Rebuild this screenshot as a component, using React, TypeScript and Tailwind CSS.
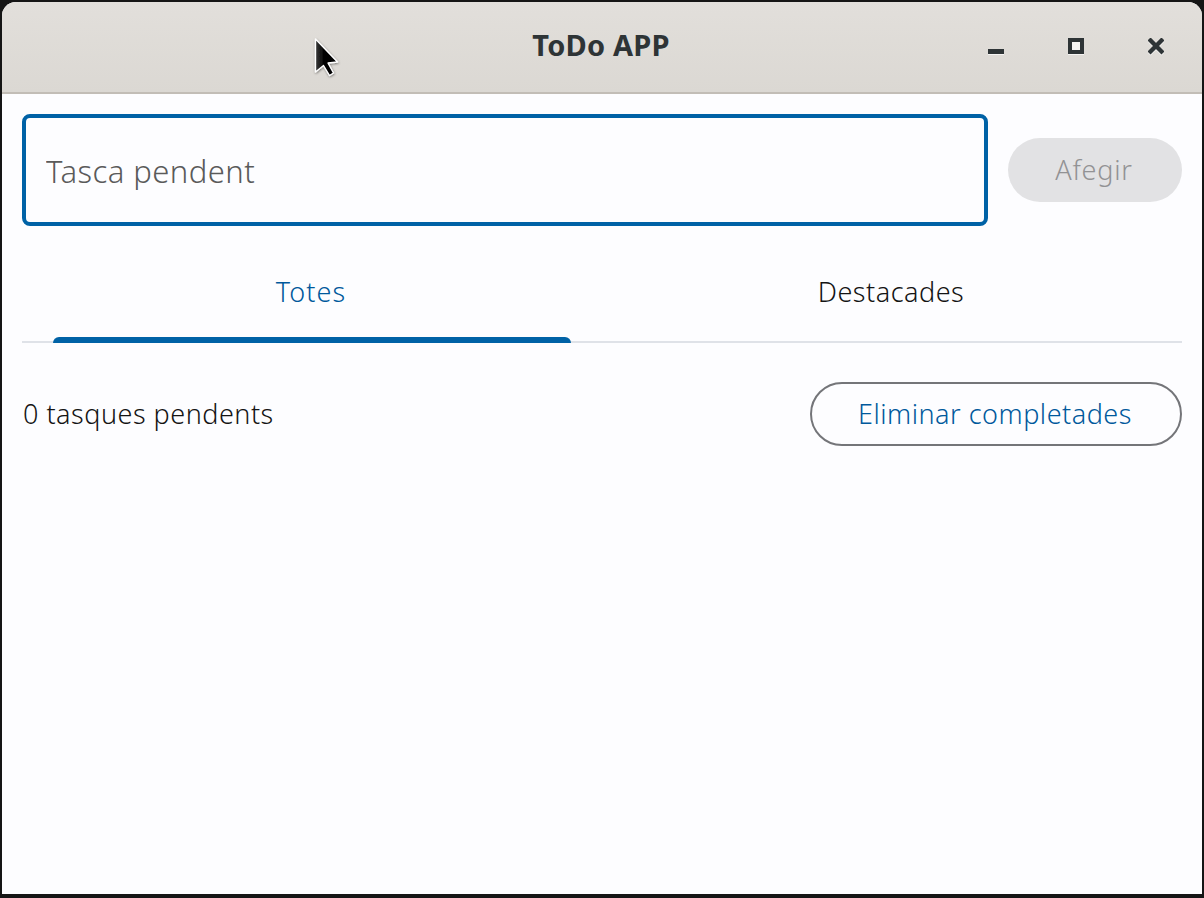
export default function App() {
  const font = "[font-family:'Noto_Sans',sans-serif]";
  return (
    <div className={`w-[1204px] h-[898px] bg-[#151515] pt-[2px] px-[2px] pb-[4px] overflow-hidden relative ${font}`}>
      <div className="h-full flex flex-col rounded-t-[14px] overflow-hidden bg-[#fdfdff]">
        <header className="h-[92px] shrink-0 border-b-2 border-[#c2bdb6] bg-gradient-to-b from-[#e2dfdb] to-[#dbd8d3] flex items-center relative">
          <div className="flex-1 text-center text-[29px] font-bold text-[#2e3436] pb-[5px] pr-[2px] tracking-[0.2px]">ToDo APP</div>
          <div className="absolute right-0 top-0 h-full flex items-center">
            <button className="w-[80px] h-[80px] flex items-center justify-center">
              <svg width="16" height="18" viewBox="0 0 16 18"><rect x="0" y="12" width="16" height="5" fill="#fff" opacity="0.7" /><rect x="0" y="11" width="16" height="5" fill="#2e3436" /></svg>
            </button>
            <button className="w-[80px] h-[80px] flex items-center justify-center">
              <svg width="16" height="18" viewBox="0 0 16 18"><rect x="0" y="1" width="16" height="16" fill="#fff" opacity="0.7" /><rect x="2" y="2" width="12" height="12" fill="none" stroke="#2e3436" strokeWidth="4" /></svg>
            </button>
            <button className="w-[80px] h-[80px] flex items-center justify-center mr-[6px]">
              <svg width="16" height="18" viewBox="0 0 16 18"><path d="M1 2 L15 16 M15 2 L1 16" stroke="#fff" strokeOpacity="0.7" strokeWidth="4.4" /><path d="M1 1 L15 15 M15 1 L1 15" stroke="#2e3436" strokeWidth="4.4" /></svg>
            </button>
          </div>
        </header>
        <main className="flex-1 px-[20px] pt-[20px]">
          <div className="flex items-center gap-[20px]">
            <input
              readOnly
              placeholder="Tasca pendent"
              className="w-[966px] h-[112px] border-4 border-[#0062a6] rounded-[8px] px-[20px] pt-[2px] text-[31px] font-light tracking-[0.45px] bg-transparent outline-none placeholder:text-[#5a5a5a]"
            />
            <button className="w-[174px] h-[64px] rounded-full bg-[#e2e2e4] text-[#929294] text-[27px] pr-[2px] font-light tracking-[0.8px]">Afegir</button>
          </div>
          <div className="flex h-[117px] border-b-2 border-[#dfe2e8] text-[27px] font-light">
            <div className="w-[580px] flex flex-col items-center">
              <div className="h-[111px] pt-[22px] pr-[2px] flex items-center text-[#00599c] tracking-[1.1px]">Totes</div>
              <div className="w-[518px] h-[6px] shrink-0 -mb-[2px] bg-[#0062a6] rounded-t-[6px]" />
            </div>
            <div className="w-[580px] flex flex-col items-center">
              <div className="h-[111px] pt-[22px] pr-[2px] flex items-center text-[#141414] tracking-[0.5px]">Destacades</div>
            </div>
          </div>
          <div className="flex items-center justify-between mt-[39px]">
            <span className="text-[27px] font-light text-[#141414] pl-[1px] tracking-[0.5px]">0 tasques pendents</span>
            <button className="w-[372px] h-[64px] rounded-full border-2 border-[#747579] text-[#00599c] text-[27px] font-light pr-[2px] tracking-[0.5px]">Eliminar completades</button>
          </div>
        </main>
      </div>
      <svg className="absolute left-[310px] top-[34px]" width="34" height="46" viewBox="310 34 34 46">
        <defs>
          <filter id="s" x="-30%" y="-30%" width="160%" height="160%"><feDropShadow dx="0.5" dy="1" stdDeviation="1" floodColor="#000" floodOpacity="0.45" /></filter>
          <linearGradient id="g" x1="0" y1="0" x2="1" y2="0"><stop offset="0" stopColor="#3a3a3a" /><stop offset="0.4" stopColor="#000" /></linearGradient>
        </defs>
        <path d="M315.5 39 V72 L323.5 65.5 L329.5 75.5 L333.5 73 L328 63 L337.5 62 Z" fill="url(#g)" stroke="#fff" strokeWidth="1.4" strokeLinejoin="round" filter="url(#s)" />
      </svg>
    </div>
  );
}
